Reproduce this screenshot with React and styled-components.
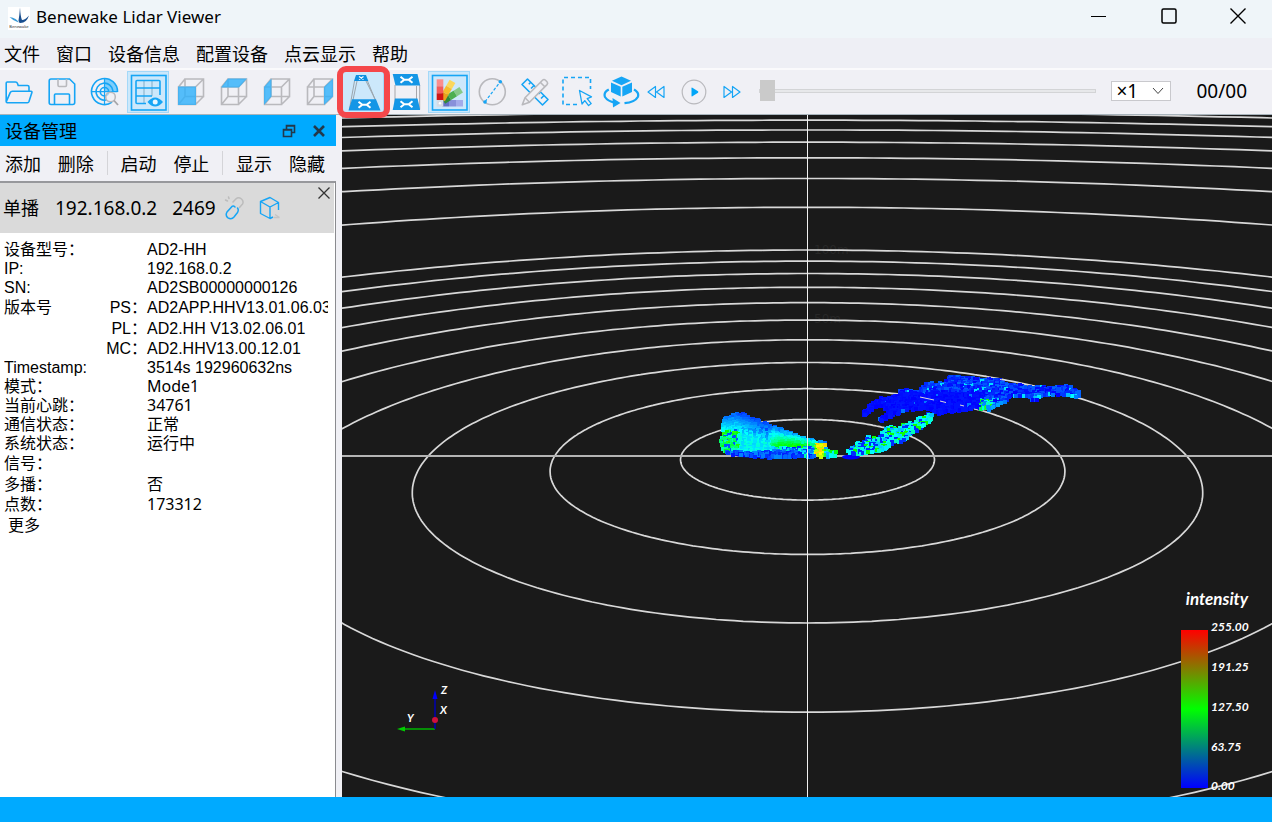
import React from 'react'
import styled, { createGlobalStyle } from 'styled-components'

const BLUE = '#16a5f5'
const GREY = '#b9b9bd'

const GlobalStyle = createGlobalStyle`
  body {
    margin: 0;
    color: #000;
    background: #f0f0f5;
    font-family: 'Noto Sans', 'Noto Sans CJK SC', sans-serif;
    font-size: 18px;
  }
  * {
    box-sizing: border-box;
  }
  button, select {
    font: inherit;
    color: inherit;
    border: 0;
    padding: 0;
    margin: 0;
    background: none;
  }
  svg {
    display: block;
  }
`

const Window = styled.div`
  display: flex;
  flex-direction: column;
  height: 100vh;
  overflow: hidden;
`

const TitleBar = styled.header`
  display: flex;
  align-items: center;
  height: 38px;
  flex: none;
  padding-left: 8px;
  background: #eff5f9;
`

const Title = styled.h1`
  flex: 1;
  margin: 0;
  padding: 0 0 4px 6px;
  font-size: 17px;
  line-height: 24px;
  font-weight: 400;
`

const WindowButton = styled.button`
  display: flex;
  align-items: center;
  justify-content: center;
  width: 70px;
  height: 32px;
  margin-bottom: 6px;
  &:last-child {
    width: 68px;
  }
`

const MenuBar = styled.nav`
  display: flex;
  align-items: center;
  gap: 16px;
  height: 32px;
  flex: none;
  padding-left: 4px;
  background: #eeeff5;
  border-bottom: 2px solid #fafafc;
`

const TextButton = styled.button`
  line-height: 26px;
  white-space: nowrap;
  font-family: 'Noto Sans CJK SC', sans-serif;
`

const ToolBar = styled.div`
  display: flex;
  align-items: center;
  height: 45px;
  flex: none;
  padding-right: 25px;
  background: #f0f0f5;
  border-bottom: 1px solid #a8b4bc;
`

const ToolGroup = styled.div`
  display: flex;
  gap: 5px;
`

const ToolButton = styled.button`
  position: relative;
  width: 38px;
  height: 38px;
  background: ${props => props.$checked ? '#cce8fb' : 'none'};
  box-shadow: ${props => props.$checked ? '0 0 0 1px #cce8fb, 0 0 0 2px #a4d8f8' : 'none'};
`

const Marker = styled.span`
  position: absolute;
  inset: -7px -8px -7px -7px;
  z-index: 1;
  border: 6px solid #f5474a;
  border-radius: 9px;
`

const PlayGroup = styled.div`
  display: flex;
  gap: 6px;
`

const PlayButton = styled.button`
  display: flex;
  align-items: center;
  justify-content: center;
  width: 32px;
  height: 32px;
`

const Progress = styled.input`
  flex: 1;
  min-width: 0;
  height: 22px;
  margin: 0 15px 3px 11px;
  appearance: none;
  background: none;
  &::-webkit-slider-runnable-track {
    height: 4px;
    background: #e7e8ea;
    border: 1px solid #d3d4d6;
  }
  &::-webkit-slider-thumb {
    appearance: none;
    width: 15px;
    height: 21px;
    margin-top: -10px;
    background: #cacaca;
  }
`

const SpeedBox = styled.div`
  position: relative;
  margin: 0 25px 2px 0;
  svg {
    position: absolute;
    right: 7px;
    top: 6px;
    pointer-events: none;
  }
`

const Speed = styled.select`
  display: block;
  width: 60px;
  height: 20px;
  padding-left: 4px;
  appearance: none;
  background: #fff;
  border: 1px solid #c9c9cd;
  font-size: 19px;
  line-height: 18px;
`

const Counter = styled.output`
  margin-bottom: 2px;
  font-size: 19px;
  line-height: 24px;
`

const Body = styled.main`
  display: flex;
  flex: 1;
  min-height: 0;
`

const Dock = styled.aside`
  display: flex;
  flex-direction: column;
  width: 336px;
  margin-right: 6px;
  flex: none;
`

const DockTitle = styled.div`
  display: flex;
  align-items: center;
  height: 31px;
  padding: 0 10px 0 5px;
  gap: 16px;
  background: #00aaff;
  h2 {
    flex: 1;
    margin: 0 0 2px;
    font: 400 18px/26px 'Noto Sans CJK SC', sans-serif;
  }
`

const DockActions = styled.div`
  display: flex;
  align-items: center;
  height: 35px;
  padding: 0 11px 2px 5px;
  justify-content: space-between;
`

const Separator = styled.span`
  width: 1px;
  height: 24px;
  margin: 0 -4px;
  background: #d4d4d8;
`

const DeviceList = styled.section`
  flex: 1;
  min-height: 0;
  background: #fff;
  border-top: 2px solid #97989c;
  border-right: 1px solid #8a8b8f;
`

const DeviceHeader = styled.div`
  position: relative;
  display: flex;
  align-items: center;
  height: 50px;
  padding-left: 3px;
  margin-right: 1px;
  background: #dadada;
  span {
    margin-right: 15px;
    font-size: 19px;
    line-height: 24px;
  }
  span:first-child {
    margin-right: 16px;
    font-size: 18px;
  }
  span:nth-child(3) {
    margin-right: 8px;
  }
  svg + svg {
    margin-left: 13px;
  }
`

const CloseDevice = styled.button`
  position: absolute;
  right: 3px;
  top: 3px;
`

const InfoBox = styled.div`
  margin: 7px 7px 0 4px;
  overflow: hidden;
`

const InfoTable = styled.table`
  width: 100%;
  table-layout: fixed;
  border-collapse: collapse;
  font: 400 16px/19px 'Liberation Sans', 'Noto Sans CJK SC', sans-serif;
  th, td {
    height: 19px;
    padding: 0;
    font-weight: 400;
    text-align: left;
    white-space: nowrap;
  }
`

const InfoRow = styled.tr`
  line-height: ${props => props.$tall ? 21 : 19}px;
`

const SubLabel = styled.th`
  && {
    text-align: right;
  }
`

const Value = styled.td`
  font-family: ${props => props.$ui ? "'Noto Sans', 'Noto Sans CJK SC', sans-serif" : 'inherit'};
`

const More = styled.button`
  display: block;
  margin-left: 8px;
  font: 400 16px/21px 'Noto Sans CJK SC', sans-serif;
`

const Viewport = styled.section`
  flex: 1;
  min-width: 0;
  background: #1a1a1a;
  svg {
    width: 100%;
    height: 100%;
  }
`

const StatusBar = styled.footer`
  height: 25px;
  flex: none;
  background: #00aaff;
`

const Icon = ({ children }) => (
  <svg width="38" height="38" viewBox="-5 -5 38 38" fill="none" stroke={BLUE} strokeWidth="1.6" aria-hidden="true">
    {children}
  </svg>
)

const Cube = ({ face }) => (
  <Icon>
    <path
      d="M1.5 9H18.5V26.5H1.5ZM8 1H26.5V18.5H8ZM1.5 9L8 1M18.5 9L26.5 1M18.5 26.5L26.5 18.5M1.5 26.5L8 18.5"
      stroke={GREY}
    />
    <polygon points={face} fill="#2db0fb" fillOpacity=".8" stroke="none" />
  </Icon>
)

const tools = [
  {
    name: '打开',
    icon: (
      <Icon>
        <path d="M1.2 23.5V5Q1.2 4 2.3 4H10.5Q12 4 12.5 5.5L13.2 7.5H22.5Q24 7.5 24 9V13" />
        <path d="M7.5 13.3H26Q27.3 13.3 26.9 14.6L24 23.6Q23.6 24.7 22.5 24.7H2.3Q1 24.7 1.4 23.4L5.2 14.6Q5.8 13.3 7.5 13.3Z" />
      </Icon>
    ),
  },
  {
    name: '保存',
    icon: (
      <Icon>
        <path d="M3 1H21.5L26.7 6V24.5Q26.7 26.5 24.7 26.5H3Q1.2 26.5 1.2 24.5V3Q1.2 1 3 1Z" />
        <path d="M6.5 26.5V17Q6.5 16 7.5 16H20.5Q21.5 16 21.5 17V26.5" />
        <path d="M10 1V7.3Q10 8.5 11.2 8.5H17.3Q18.5 8.5 18.5 7.3V1" stroke={GREY} />
      </Icon>
    ),
  },
  {
    name: '搜索',
    icon: (
      <Icon>
        <path d="M13.5 13.7V1A13 13 0 0 1 26.5 13.7Z" fill="#7dcdfb" stroke="none" />
        <path d="M21 24.2A13 13 0 1 1 26.5 14" />
        <path d="M16 21.8A8.5 8.5 0 1 1 22 13" />
        <circle cx="13.5" cy="13.7" r="4.2" />
        <path d="M13.5 .5V26.5M.5 13.7H26.5" strokeWidth="1.2" />
        <circle cx="19.5" cy="19" r="4.8" stroke={GREY} fill="#f0f0f5" fillOpacity=".6" />
        <path d="M23 22.5L27 27" stroke="#a5a5a8" strokeWidth="1.8" />
      </Icon>
    ),
  },
  {
    name: '网格',
    checked: true,
    icon: (
      <Icon>
        <rect x="-2.5" y="-2.5" width="34.5" height="34.5" />
        <path d="M10 2.5V25M18 2.5V18" stroke="#9fc3da" />
        <path d="M12 25.5H3Q2 25.5 2 24.5V3.5Q2 2.500 3 2.500H25Q26 2.500 26 3.500V17M2 10H26M2 18H18" />
        <path d="M13.500 24Q21 15 29 24Q21 33 13.500 24Z" fill={BLUE} stroke="none" />
        <circle cx="21.200" cy="24" r="2.500" fill="#e8f6ff" stroke="none" />
      </Icon>
    ),
  },
  { name: '前视图', icon: <Cube face="1,8.5 19,8.5 19,27 1,27" /> },
  { name: '俯视图', icon: <Cube face="1,9.5 8,.5 27,.5 19,9.5" /> },
  { name: '左视图', icon: <Cube face="1,9 8.5,.5 8.5,18.5 1,27" /> },
  { name: '右视图', icon: <Cube face="18,9 27,.5 27,18.5 18,27" /> },
  {
    name: '透视投影',
    checked: true,
    marked: true,
    icon: (
      <Icon>
        <path d="M5.500 3L.5 31M8 3L4 22M18.500 3L30 31M17 3L26.500 22" stroke="#9aa5ad" strokeWidth="1" />
        <polygon points="7,-3 17,-3 19.3,3 5,3" fill="#0f8fe0" stroke="none" />
        <polygon points="3,21.3 27,21.3 31.5,32.5 -.5,32.5" fill="#1496e6" stroke="none" />
        <path d="M10 -1.500L14.500 1.500M14.500 -1.500L10 1.500" stroke="#fff" strokeWidth="1.2" />
        <path d="M9.500 23.800L13.300 26.800L9.500 29.800M21.500 23.800L17.700 26.800L21.500 29.800M13 26.800H18" stroke="#fff" strokeWidth="2" />
      </Icon>
    ),
  },
  {
    name: '平行投影',
    icon: (
      <Icon>
        <path d="M3 7V31M27.700 7V31M24.500 8V21" stroke="#a6a6aa" strokeWidth="1" />
        <polygon points=".7,-4 25.5,-4 28.2,7.5 3.5,7.5" fill="#1496e6" stroke="none" />
        <polygon points="3,20.5 25.5,20.5 28.2,32 .7,32" fill="#1496e6" stroke="none" />
        <path d="M8.500 -1.300L12.300 1.700L8.500 4.700M20.500 -1.300L16.700 1.700L20.500 4.700M12 1.700H17" stroke="#fff" strokeWidth="2" />
        <path d="M8.500 23.200L12.300 26.200L8.500 29.200M20.500 23.200L16.700 26.200L20.500 29.200M12 26.200H17" stroke="#fff" strokeWidth="2" />
      </Icon>
    ),
  },
  {
    name: '颜色',
    checked: true,
    icon: (
      <Icon>
        <rect x="-2.5" y="-2.5" width="34.5" height="34.5" />
        <g stroke="none">
          <g transform="rotate(90 5 25)">
            <rect x="2" y="2" width="6.500" height="7" fill="#a3abea" />
            <rect x="2" y="9" width="6.500" height="7" fill="#8790da" />
            <rect x="2" y="16" width="6.500" height="7" fill="#6471c4" />
          </g>
          <g transform="rotate(58 5 25)">
            <rect x="1.700" y="0" width="6.600" height="7" fill="#85c987" />
            <rect x="1.700" y="7" width="6.600" height="7" fill="#4caf50" />
            <rect x="1.700" y="14" width="6.600" height="7" fill="#2f8a3a" />
          </g>
          <g transform="rotate(30 5 25)">
            <rect x="1.700" y="0" width="6.600" height="7" fill="#fbd75c" />
            <rect x="1.700" y="7" width="6.600" height="7" fill="#f6bd2b" />
            <rect x="1.700" y="14" width="6.600" height="7" fill="#e8a21c" />
          </g>
          <rect x="1.700" y="1.300" width="6.600" height="7" fill="#fb8d8d" />
          <rect x="1.700" y="8.300" width="6.600" height="7" fill="#f45b5b" />
          <rect x="1.700" y="15.300" width="6.600" height="6.700" fill="#cf1515" />
          <rect x="1.700" y="22" width="6.600" height="6.700" fill="#d5dbe4" />
          <circle cx="5" cy="25.300" r="1.200" fill="#fff" />
        </g>
      </Icon>
    ),
  },
  {
    name: '直径',
    icon: (
      <Icon>
        <circle cx="14.3" cy="13.8" r="13" stroke={GREY} />
        <path d="M7 23.8L22.2 3.8" strokeDasharray="3 1.8" strokeWidth="1.2" />
        <circle cx="7" cy="24" r="1.8" fill={BLUE} stroke="none" />
        <circle cx="22.3" cy="3.8" r="1.8" fill={BLUE} stroke="none" />
      </Icon>
    ),
  },
  {
    name: '测量',
    icon: (
      <Icon>
        <path d="M6.5 1L27 21.5L21.5 27L1 6.5Z" strokeLinejoin="round" />
        <path d="M9.8 4.2L7.8 6.2M13 7.5L10 10.5M19.5 14L17.5 16M23 17.5L20 20.5" />
        <path d="M21.5 2.3Q23 .8 24.5 2.3L26 3.8Q27.3 5.2 26 6.6L8.5 24.2L1.3 26.8L4 19.8Z" stroke={GREY} fill="#f0f0f5" strokeLinejoin="round" />
        <path d="M19.5 4.5L23.8 8.8M4 19.8L8.5 24.2" stroke={GREY} />
      </Icon>
    ),
  },
  {
    name: '框选',
    icon: (
      <Icon>
        <path d="M13 26.5H-1V-.5H26.5V11" strokeDasharray="4 3" />
        <path d="M15.5 12.5L27.5 18.8L23.2 20.6L27.2 25.6L24.6 27.6L20.8 22.6L18 26Z" strokeLinejoin="round" strokeWidth="1.3" />
      </Icon>
    ),
  },
  {
    name: '旋转',
    icon: (
      <Icon>
        <g fill={BLUE} stroke="none">
          <path d="M14.5 -1.5L24 2.8L14.5 7.2L5 2.8Z" />
          <path d="M4 4.5L13.7 8.8V18.5L4 14Z" />
          <path d="M25 4.5L15.3 8.8V18.5L25 14Z" />
          <path d="M5.5 20L13.5 25L6 29.5Z" />
        </g>
        <path d="M1.8 11.5Q-3.8 14.5 -2 19Q.5 23 8 24.8" strokeWidth="2.2" />
        <path d="M27 11.5Q32.5 14.5 30.8 19Q28 24.2 17.5 25.2" strokeWidth="2.2" />
      </Icon>
    ),
  },
]

const info = [
  { label: '设备型号：', value: 'AD2-HH' },
  { label: 'IP:', value: '192.168.0.2' },
  { label: 'SN:', value: 'AD2SB00000000126' },
  { label: '版本号', sub: 'PS：', value: 'AD2APP.HHV13.01.06.03', tall: true },
  { label: '', sub: 'PL：', value: 'AD2.HH V13.02.06.01', tall: true },
  { label: '', sub: 'MC：', value: 'AD2.HHV13.00.12.01' },
  { label: 'Timestamp:', value: '3514s 192960632ns' },
  { label: '模式：', value: 'Mode1', ui: true },
  { label: '当前心跳：', value: '34761', ui: true },
  { label: '通信状态：', value: '正常' },
  { label: '系统状态：', value: '运行中' },
  { label: '信号：', value: '', tall: true },
  { label: '多播：', value: '否', tall: true },
  { label: '点数：', value: '173312', ui: true },
]

// ground plane -> view, distance in units of 5m, camera tilted down
const project = (x, z) => {
  const w = 1 + 0.094 * z
  return [807.5 + (126.4 * x) / w, (456 + 2.9 * z) / w]
}

const ringPath = r => {
  const points = []
  for (let a = -180; a <= 180; a += 1) {
    const t = (a * Math.PI) / 180
    const z = r * Math.cos(t)
    if (1 + 0.094 * z > 0.1) {
      const [x, y] = project(r * Math.sin(t), z)
      points.push(x.toFixed(1) + ' ' + y.toFixed(1))
    }
  }
  return 'M' + points.join('L')
}

const rings = [1, 2, 3, 4, 5, 6, 7, 8, 9, 10, 15, 20, 25, 30, 35, 40, 45].map(ringPath)

function random(seed) {
  let s = seed
  return () => {
    s = (s * 16807) % 2147483647
    return s / 2147483647
  }
}

function inside(poly, x, y) {
  let hit = false
  for (let i = 0, j = poly.length - 1; i < poly.length; j = i++) {
    const [xi, yi] = poly[i]
    const [xj, yj] = poly[j]
    if (yi > y !== yj > y && x < ((xj - xi) * (y - yi)) / (yj - yi) + xi) hit = !hit
  }
  return hit
}

// v 0..1, blue -> cyan -> green -> yellow
const heat = v => {
  const h = 240 - Math.max(0, Math.min(1, v)) * 190
  return `hsl(${Math.round(h)} 100% 50%)`
}

function fillCloud(poly, size, seed, value) {
  const rnd = random(seed)
  const xs = poly.map(p => p[0])
  const ys = poly.map(p => p[1])
  const cells = []
  for (let y = Math.min(...ys); y < Math.max(...ys); y += 2) {
    for (let x = Math.min(...xs); x < Math.max(...xs); x += 2) {
      const jx = x + (rnd() - 0.5) * 2
      const jy = y + (rnd() - 0.5) * 2
      const v = value(jx, jy, rnd)
      if (inside(poly, jx, jy)) {
        cells.push({ x: Math.round(jx) - 1, y: Math.round(jy) - 1, size, fill: heat(v) })
      }
    }
  }
  return cells
}

const wall = [
  [722, 417], [738, 412], [746, 415], [770, 424], [800, 436], [824, 442], [826, 448],
  [837, 450], [836, 455], [822, 456], [770, 457], [730, 454], [723, 450], [719, 441], [722, 434],
]
const roof = [
  [860, 413], [866, 406], [877, 398], [896, 394], [900, 388], [917, 390], [925, 382], [944, 382],
  [948, 375], [967, 376], [983, 378], [998, 378], [1003, 382], [1033, 386], [1053, 385], [1068, 385],
  [1079, 392], [1079, 397], [1063, 395], [1043, 394], [1034, 402], [1028, 396], [1013, 396],
  [1000, 403], [988, 409], [973, 408], [953, 411], [938, 414], [923, 408], [904, 410], [893, 415],
  [880, 421], [877, 418], [889, 410], [877, 405], [864, 415],
]
const trail = [
  [846, 451], [852, 446], [858, 441], [864, 441], [866, 436], [878, 437], [882, 431], [887, 425],
  [897, 428], [904, 422], [914, 422], [916, 417], [924, 416], [927, 412], [932, 414], [932, 419],
  [924, 424], [918, 429], [909, 434], [903, 440], [890, 443], [887, 448], [870, 452], [858, 453], [847, 454],
]

const cloud = [
  ...fillCloud(wall, 4, 71, (x, y, rnd) => {
    const n = rnd()
    if (y > 451 && x < 800) return 0.03 + n * 0.15
    if (x < 737 && y > 430) return n < 0.2 ? 0.1 : 0.3 + n * 0.42
    if (x < 737) return 0.1 + Math.max(0, y - 414) * 0.012 + n * 0.05
    const top = 412 + (x - 738) * 0.34
    const depth = (y - top) / 24
    if (x < 770) return Math.min(0.34, 0.06 + depth * 0.32) + (y > 428 && Math.floor(x / 3) % 2 ? -0.08 : 0) + n * 0.03
    if (y > 447 && x < 814) return n * 0.45
    if (x > 815 && x < 824 && y > 443) return 0.75 + n * 0.3
    if (x > 824) return 0.2 + n * 0.5
    return Math.min(0.62, 0.06 + depth * (0.45 + (x - 770) * 0.02)) + n * 0.06
  }),
  ...fillCloud(roof, 4, 19, (x, y, rnd) => {
    const n = rnd()
    if (x > 980 && x < 992 && y > 399) return n * 0.7
    if (x > 1026 && y > 394) return n * 0.35
    if (x > 985 && y > 399) return n * 0.3
    if (y < 391 || x > 985) return n > 0.95 ? 0.28 : n * 0.14
    return n > 0.97 ? 0.15 : n * 0.03
  }),
  ...fillCloud(trail, 4, 43, (x, y, rnd) => {
    const n = rnd()
    return n > 0.85 ? 0.65 : n < 0.25 ? 0.06 : 0.15 + n * 0.3
  }),
]

const legend = [
  ['255.00', 631], ['191.25', 671], ['127.50', 711], ['63.75', 751], ['0.00', 790],
]

const Scene = () => (
  <svg viewBox="342 115 930 682" preserveAspectRatio="xMidYMid slice" role="img" aria-label="点云">
    <defs>
      <linearGradient id="intensity" x1="0" y1="0" x2="0" y2="1">
        <stop offset="0" stopColor="#f00" />
        <stop offset=".5" stopColor="#0f0" />
        <stop offset="1" stopColor="#00f" />
      </linearGradient>
    </defs>
    <g fill="#272727" fontFamily="'DejaVu Sans', sans-serif" fontSize="12">
      <text x="814" y="254">100m</text>
      <text x="814" y="323">50m</text>
    </g>
    <g fill="none" stroke="#d8d8d8" strokeWidth="1.7">
      {rings.map((d, i) => <path key={i} d={d} />)}
    </g>
    <path d="M342 456H1272" stroke="#b4b4b4" strokeWidth="2" />
    <ellipse cx="851" cy="457" rx="9" ry="2.5" fill="#00f" />
    <path d="M728 454L770 456V458.5L740 457Z" fill="#00f" />
    <g shapeRendering="crispEdges">
      {cloud.map((c, i) => <rect key={i} x={c.x} y={c.y} width={c.size} height={c.size} fill={c.fill} />)}
    </g>
    <path d="M920 397L934 400M940 401L946 402.500M960 405L964 406M974 409L978 410M985 376L989 377M1000 379.500L1007 380.500" stroke="#d8d8d8" />
    <path d="M807.5 115V797" stroke="#f0f0f0" />
    <g fontFamily="Lato, sans-serif" fontWeight="700" fontStyle="italic" fill="#fff">
      <path d="M404 729H435" stroke="#00b400" strokeWidth="1.5" />
      <polygon points="397,729 405,726.5 405,731.5" fill="#0c0" />
      <path d="M435 729V698" stroke="#0000b4" strokeWidth="1.5" />
      <polygon points="435,690 432.5,699 437.5,699" fill="#00f" />
      <circle cx="435" cy="720" r="3" fill="#d0103c" />
      <g fontSize="11">
        <text x="441" y="694">Z</text>
        <text x="440" y="714">X</text>
        <text x="407" y="722">Y</text>
      </g>
      <rect x="1181" y="630" width="27" height="158" fill="url(#intensity)" />
      <text x="1217" y="605" fontSize="17" textAnchor="middle">intensity</text>
      <g fontSize="12">
        {legend.map(([text, y]) => <text key={text} x="1211" y={y}>{text}</text>)}
      </g>
    </g>
  </svg>
)

const Logo = () => (
  <svg width="22" height="24" viewBox="0 0 22 24" aria-hidden="true">
    <rect width="22" height="23" fill="#fff" />
    <path d="M1.5 10Q9 11 10.5 15.5Q5.5 14 1.5 10Z" fill="#3a9bd8" />
    <path d="M12 .5Q12.5 10 14 13Q17 13 21 8.5Q18.5 16 12.5 16Q10.5 16 10.5 13.5Q11.5 8 12 .5Z" fill="#1a4f8f" />
    <text x="11" y="20.5" fontSize="4" textAnchor="middle" fill="#333">Benewake</text>
  </svg>
)

const App = () => (
  <Window>
    <GlobalStyle />
    <TitleBar>
      <Logo />
      <Title>Benewake Lidar Viewer</Title>
      <WindowButton aria-label="最小化">
        <svg width="16" height="16" stroke="#000"><path d="M0 8.5H15" /></svg>
      </WindowButton>
      <WindowButton aria-label="最大化">
        <svg width="16" height="16" fill="none" stroke="#000" strokeWidth="1.5"><rect x="1" y="1" width="14" height="14" rx="1.5" /></svg>
      </WindowButton>
      <WindowButton aria-label="关闭">
        <svg width="16" height="16" stroke="#000" strokeWidth="1.4"><path d="M.5.5L15.5 15.5M15.5.5L.5 15.5" /></svg>
      </WindowButton>
    </TitleBar>
    <MenuBar>
      {['文件', '窗口', '设备信息', '配置设备', '点云显示', '帮助'].map(item =>
        <TextButton key={item}>{item}</TextButton>)}
    </MenuBar>
    <ToolBar>
      <ToolGroup>
        {tools.map(tool =>
          <ToolButton key={tool.name} aria-label={tool.name} $checked={tool.checked}>
            {tool.icon}
            {tool.marked && <Marker />}
          </ToolButton>)}
      </ToolGroup>
      <PlayGroup>
        <PlayButton aria-label="后退">
          <svg width="18" height="14" fill="none" stroke={BLUE} strokeWidth="1.2" strokeLinejoin="round">
            <path d="M8.5 1.5V12.5L1 7ZM17 1.5V12.5L9.5 7Z" />
          </svg>
        </PlayButton>
        <PlayButton aria-label="播放">
          <svg width="26" height="26" viewBox="0 0 26 26">
            <circle cx="13" cy="13" r="11.8" fill="none" stroke={GREY} strokeWidth="1.2" />
            <path d="M10.5 9.2Q10.5 8.3 11.4 8.8L17 12.3Q17.8 13 17 13.7L11.4 17.2Q10.5 17.7 10.5 16.8Z" fill="#00a6f8" />
          </svg>
        </PlayButton>
        <PlayButton aria-label="前进">
          <svg width="18" height="14" fill="none" stroke={BLUE} strokeWidth="1.2" strokeLinejoin="round">
            <path d="M1 1.5V12.5L8.5 7ZM9.5 1.5V12.5L17 7Z" />
          </svg>
        </PlayButton>
      </PlayGroup>
      <Progress type="range" min="0" max="100" defaultValue="0" aria-label="播放进度" />
      <SpeedBox>
        <Speed aria-label="播放速度">
          <option>×1</option>
        </Speed>
        <svg width="12" height="8" fill="none" stroke="#444"><path d="M1 1L6 6.5L11 1" /></svg>
      </SpeedBox>
      <Counter>00/00</Counter>
    </ToolBar>
    <Body>
      <Dock>
        <DockTitle>
          <h2>设备管理</h2>
          <button aria-label="浮动">
            <svg width="14" height="14" fill="none" stroke="#23384a" strokeWidth="1.6">
              <path d="M4.5 5V1.5H12.5V8.5H9.5M4 2H13" />
              <path d="M1.5 5.5H9.5V12.5H1.5ZM1 6H10" />
            </svg>
          </button>
          <button aria-label="关闭面板">
            <svg width="14" height="14" stroke="#23384a" strokeWidth="2.6"><path d="M2 2L12 12M12 2L2 12" /></svg>
          </button>
        </DockTitle>
        <DockActions>
          <TextButton>添加</TextButton>
          <TextButton>删除</TextButton>
          <Separator />
          <TextButton>启动</TextButton>
          <TextButton>停止</TextButton>
          <Separator />
          <TextButton>显示</TextButton>
          <TextButton>隐藏</TextButton>
        </DockActions>
        <DeviceList>
          <DeviceHeader>
            <span>单播</span>
            <span>192.168.0.2</span>
            <span>2469</span>
            <svg width="22" height="24" fill="none" stroke="#bcbcbc" strokeWidth="1.5" strokeLinecap="round">
              <path d="M9 6L12 2.8Q14.5 .8 17.5 3Q20 5.5 18.5 8L15.5 11.5M3.5 5L1.5 4M5 2.5L4.5 1" />
              <path d="M8 10.5L3 16Q1 19.5 4 21.8Q7.5 24 10 21L13.5 16.5Q15 14 13.5 12M8 10.5Q9.5 9.5 11 11" stroke={BLUE} />
            </svg>
            <svg width="22" height="24" fill="none" stroke={BLUE} strokeWidth="1.4" strokeLinejoin="round">
              <path d="M19.5 14V6.5L11 1.5L1.5 5.5V17.5L11 22.5V11L1.5 5.5M11 11L19.5 6.5M11 22.5L14 21" />
              <path d="M14.5 21.5L20.5 21.5M16 18.5L20.5 21.5" stroke="#c4c4c4" />
            </svg>
            <CloseDevice aria-label="移除设备">
              <svg width="14" height="14" stroke="#333" strokeWidth="1.3"><path d="M1.5 1.5L12.5 12.5M12.5 1.5L1.5 12.5" /></svg>
            </CloseDevice>
          </DeviceHeader>
          <InfoBox>
            <InfoTable>
              <colgroup>
                <col width="96" />
                <col width="47" />
                <col />
              </colgroup>
              <tbody>
                {info.map((row, i) =>
                  <InfoRow key={i} $tall={row.tall}>
                    <th scope="row" colSpan={row.sub ? 1 : 2}>{row.label}</th>
                    {row.sub && <SubLabel scope="row">{row.sub}</SubLabel>}
                    <Value $ui={row.ui}>{row.value}</Value>
                  </InfoRow>)}
              </tbody>
            </InfoTable>
          </InfoBox>
          <More>更多</More>
        </DeviceList>
      </Dock>
      <Viewport>
        <Scene />
      </Viewport>
    </Body>
    <StatusBar />
  </Window>
)

export default App
